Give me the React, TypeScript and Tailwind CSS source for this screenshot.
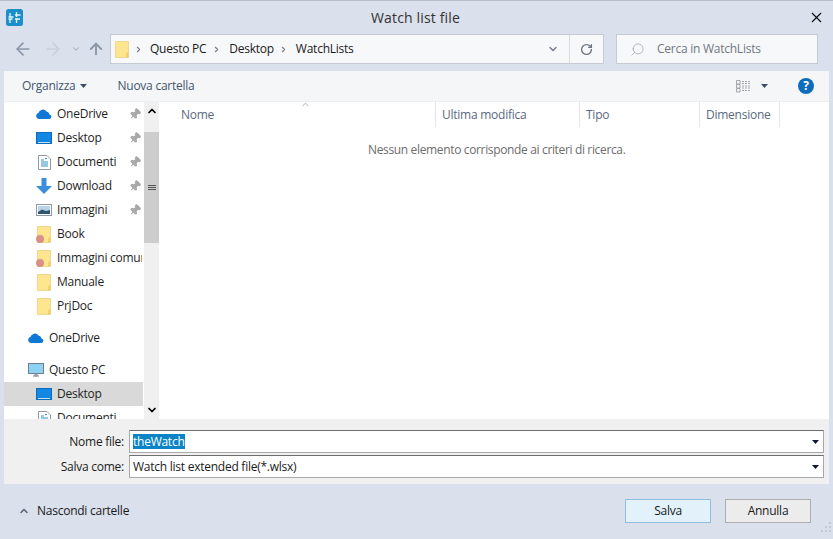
import { ArrowLeft, ArrowRight, ArrowUp, ChevronDown, ChevronRight, ChevronUp, Pin, RotateCw, Search, X } from "lucide-react";

function Caret({ className = "" }: { className?: string }) {
  return (
    <svg width="7" height="4" viewBox="0 0 9 5" preserveAspectRatio="none" className={className}>
      <path d="M0 0h9L4.5 5z" fill="currentColor" />
    </svg>
  );
}

function AppIcon() {
  return (
    <svg width="17" height="17" viewBox="0 0 17 17">
      <rect width="17" height="17" rx="2.5" fill="#1b8fc9" />
      <path d="M4 4v4M2.5 8h5M4 10v4M2.5 10h4M10.5 3v5M9 6h5.5M10.5 10v4M9 10h5" stroke="#e8f6fc" strokeWidth="1.3" fill="none" />
    </svg>
  );
}

function FolderIcon({ shared = false }: { shared?: boolean }) {
  return (
    <svg width="16" height="17" viewBox="0 0 16 17">
      <path d="M1.500.500h13v16h-13z" fill="#fde68f" stroke="#ecd98e" />
      <path d="M12 16.500v-4l2.500-2v6z" fill="#f2cf6b" />
      {shared && <circle cx="4" cy="13" r="4" fill="#d98f86" />}
    </svg>
  );
}

function CloudIcon() {
  return (
    <svg width="16" height="10" viewBox="0 0 16 10">
      <path d="M3 10a3 3 0 0 1-.6-5.900A4.500 4.500 0 0 1 10.500 2.500a3.600 3.600 0 0 1 3 3A2.300 2.300 0 0 1 13.500 10z" fill="#0f78d4" />
    </svg>
  );
}

function DesktopIcon() {
  return (
    <svg width="16" height="12" viewBox="0 0 16 12">
      <rect width="16" height="12" fill="#1387e4" />
      <rect x="0.500" y="0.500" width="15" height="11" fill="none" stroke="#0a6cbb" />
      <path d="M2 10.500h12" stroke="#bfe2fa" />
    </svg>
  );
}

function DocumentIcon() {
  return (
    <svg width="13" height="15" viewBox="0 0 13 15">
      <path d="M.5.500h8.500l3.500 3.500v10.500H.5z" fill="#fff" stroke="#8f9aa6" />
      <path d="M3 5h3M3 7h7M3 9h7M3 11h7M7 3.500h2" stroke="#2f8fd0" />
    </svg>
  );
}

function DownloadIcon() {
  return (
    <svg width="16" height="16" viewBox="0 0 16 16">
      <path d="M5.500 0h5v8H16l-8 8-8-8h5.500z" fill="#3b8edb" />
    </svg>
  );
}

function PicturesIcon() {
  return (
    <svg width="16" height="12" viewBox="0 0 16 12">
      <rect x="0.500" y="0.500" width="15" height="11" fill="#fff" stroke="#8d99a6" />
      <rect x="2" y="2" width="12" height="8" fill="#b9d4e8" />
      <path d="M2 8l4-2.500 4 1.500 4-1v4H2z" fill="#30566f" />
    </svg>
  );
}

function MonitorIcon() {
  return (
    <svg width="16" height="14" viewBox="0 0 16 14">
      <rect x="0.500" y="0.500" width="15" height="10" fill="#8fd0f5" stroke="#6c7f8f" />
      <path d="M5 13h6M7 11h2v2H7z" stroke="#7d8a96" fill="none" />
    </svg>
  );
}

function ViewIcon() {
  return (
    <svg width="16" height="13" viewBox="0 0 16 13" fill="none" stroke="#a3a7ac">
      <path d="M.5.500h3.500v3.500H.5zM.5 4.500h3.500V8H.5zM.5 8.500h3.500V12H.5z" />
      <path d="M6 1.500h9M6 3.500h9M6 6h9M6 8h9M6 10.500h9" strokeDasharray="2 1" />
    </svg>
  );
}

function Grip() {
  return (
    <svg width="16" height="16" viewBox="0 0 16 16" className="absolute bottom-[3px] right-0 text-[#c3c9d6]">
      <path d="M12 2h2v2h-2zM8 6h2v2H8zM12 6h2v2h-2zM4 10h2v2H4zM8 10h2v2H8zM12 10h2v2h-2z" fill="currentColor" />
    </svg>
  );
}

function PathSep({ className }: { className: string }) {
  return <ChevronRight size={9} strokeWidth={3} className={`shrink-0 text-[#7a7f87] ${className}`} />;
}

function TreeRow({ icon, label, pinned, top, selected, clipped, root }: { icon: React.ReactNode; label: string; pinned?: boolean; top?: string; selected?: boolean; clipped?: boolean; root?: boolean }) {
  return (
    <div className={`flex h-6 shrink-0 items-center ${root ? "pl-6" : "pl-8"} ${top ?? ""} ${selected ? "mr-px bg-[#d9d9d9]" : ""} ${clipped ? "mr-[2px] overflow-hidden" : ""}`}>
      <span className="flex w-4 shrink-0 justify-center">{icon}</span>
      <span className="ml-[5px] whitespace-nowrap text-[#1f1f1f]">{label}</span>
      {pinned && <Pin size={12} className="ml-auto mr-[3px] shrink-0 rotate-45 fill-[#a8a8a8] text-[#a8a8a8]" />}
    </div>
  );
}

function Column({ label, width, last }: { label: string; width: string; last?: boolean }) {
  return (
    <div className={`flex h-[25px] items-center text-[#5a6a80] ${width} ${last ? "" : "border-r border-[#e5e5e5]"}`}>
      {label}
    </div>
  );
}

function FormRow({ label, children }: { label: string; children: React.ReactNode }) {
  return (
    <div className="flex h-[23px] items-center">
      <span className="w-[120px] text-right text-[#1a1a1a]">{label}</span>
      <div className="ml-[5px] flex h-full w-[695px] items-center justify-between border border-[#a8a8a8] border-t-[#6f6f6f] bg-white pl-[3px] pr-1 text-[#1a1a1a]">
        {children}
        <Caret className="text-[#10183a]" />
      </div>
    </div>
  );
}

export default function App() {
  return (
    <div className="flex h-[539px] w-[833px] flex-col overflow-hidden border-t border-[#b9bcc4] bg-[#dae0ec] font-['Open_Sans',sans-serif] text-[12px] tracking-[-0.25px] text-[#1a1a1a]">
      <div className="flex h-[33px] shrink-0 items-center justify-between pl-[6px] pr-2">
        <AppIcon />
        <span className="text-[14px] tracking-[0.15px] text-[#333]">Watch list file</span>
        <X size={17} strokeWidth={1.5} className="text-black" />
      </div>

      <div className="flex h-[30px] shrink-0 items-center pl-[13px]">
        <div className="flex w-[97px] items-center text-[#8b97a8]">
          <ArrowLeft size={20} strokeWidth={2} />
          <ArrowRight size={20} strokeWidth={2} className="ml-[10px] text-[#c9d0dc]" />
          <ChevronDown size={10} strokeWidth={2.5} className="ml-2 text-[#a8b0bd]" />
          <ArrowUp size={18} strokeWidth={2.5} className="ml-[6px]" />
        </div>
        <div className="flex h-[30px] w-[494px] items-center border border-[#c5cad4] bg-[#f7f8fa]">
          <span className="ml-[3px]"><FolderIcon /></span>
          <PathSep className="ml-1" />
          <span className="ml-[7px]">Questo PC</span>
          <PathSep className="ml-[6px]" />
          <span className="ml-2">Desktop</span>
          <PathSep className="ml-[5px]" />
          <span className="ml-2">WatchLists</span>
          <ChevronDown size={12} strokeWidth={2.5} className="ml-auto mr-[10px] text-[#6d7682]" />
          <div className="flex h-full w-[34px] items-center justify-center border-l border-[#d5d9e0]">
            <RotateCw size={13} strokeWidth={2.5} className="text-[#6d7682]" />
          </div>
        </div>
        <div className="ml-3 flex h-[30px] w-[202px] items-center border border-[#c5cad4] bg-[#f7f8fa] pl-[13px] text-[#6f7782]">
          <Search size={15} strokeWidth={1} className="-scale-x-100 text-[#8f959e]" />
          <span className="ml-3">Cerca in WatchLists</span>
        </div>
      </div>

      <div className="mx-1 mt-[7px] flex h-[413px] w-[825px] shrink-0 flex-col bg-white">
        <div className="flex h-[31px] shrink-0 items-center border-b border-[#eeeeee] bg-[#f5f6f7] pl-[18px] text-[#43566f]">
          <span>Organizza</span>
          <Caret className="ml-[5px] text-[#3c4d66]" />
          <span className="ml-[30px]">Nuova cartella</span>
          <span className="ml-auto"><ViewIcon /></span>
          <Caret className="ml-[9px] text-[#3c4d66]" />
          <span className="ml-[30px] mr-[15px] flex h-4 w-4 items-center justify-center rounded-full bg-[#0f6cbd] text-[12px] font-bold text-white">?</span>
        </div>

        <div className="flex h-[317px] shrink-0">
          <div className="flex w-[140px] shrink-0 flex-col overflow-hidden">
            <TreeRow icon={<CloudIcon />} label="OneDrive" pinned />
            <TreeRow icon={<DesktopIcon />} label="Desktop" pinned />
            <TreeRow icon={<DocumentIcon />} label="Documenti" pinned />
            <TreeRow icon={<DownloadIcon />} label="Download" pinned />
            <TreeRow icon={<PicturesIcon />} label="Immagini" pinned />
            <TreeRow icon={<FolderIcon shared />} label="Book" />
            <TreeRow icon={<FolderIcon shared />} label="Immagini comuni" clipped />
            <TreeRow icon={<FolderIcon />} label="Manuale" />
            <TreeRow icon={<FolderIcon />} label="PrjDoc" />
            <TreeRow icon={<CloudIcon />} label="OneDrive" top="mt-2" root />
            <TreeRow icon={<MonitorIcon />} label="Questo PC" top="mt-2" root />
            <TreeRow icon={<DesktopIcon />} label="Desktop" selected />
            <TreeRow icon={<DocumentIcon />} label="Documenti" />
          </div>

          <div className="flex w-[15px] shrink-0 flex-col items-center bg-[#f0f0f0]">
            <div className="flex h-[30px] w-full shrink-0 justify-center pt-[3px]">
              <ChevronUp size={12} strokeWidth={3.5} className="text-black" />
            </div>
            <div className="flex h-[111px] w-full flex-col items-center justify-center gap-px bg-[#cdcdcd]">
              <span className="h-px w-2 bg-[#555]" />
              <span className="h-px w-2 bg-[#555]" />
              <span className="h-px w-2 bg-[#555]" />
            </div>
            <ChevronDown size={12} strokeWidth={3.5} className="mb-[3px] mt-auto text-black" />
          </div>

          <div className="relative min-w-0 flex-1">
            <ChevronUp size={11} strokeWidth={1} className="absolute left-[141px] top-[-3px] text-[#555]" />
            <div className="flex">
              <Column label="Nome" width="w-[277px] pl-[22px]" />
              <Column label="Ultima modifica" width="w-[144px] pl-[6px]" />
              <Column label="Tipo" width="w-[120px] pl-[6px]" />
              <Column label="Dimensione" width="w-[80px] pl-[6px]" />
            </div>
            <p className="ml-[209px] mt-[14px] tracking-[-0.35px] text-[#6d6d6d]">Nessun elemento corrisponde ai criteri di ricerca.</p>
          </div>
        </div>

        <div className="flex flex-1 flex-col gap-[2px] bg-[#f0f0f0] pt-[11px]">
          <FormRow label="Nome file:">
            <span className="bg-[#0a84c6] leading-[15px] text-white">theWatch</span>
          </FormRow>
          <FormRow label="Salva come:">
            <span>Watch list extended file(*.wlsx)</span>
          </FormRow>
        </div>
      </div>

      <div className="relative flex flex-1 items-center pb-[2px] pl-[18px]">
        <ChevronUp size={12} strokeWidth={2.5} className="text-[#4a5568]" />
        <span className="ml-[7px]">Nascondi cartelle</span>
        <button className="ml-auto h-6 w-[86px] border border-[#8fbde0] bg-[#e3f1fb]">Salva</button>
        <button className="ml-[14px] mr-[22px] h-6 w-[86px] border border-[#adadad] bg-[#ececec]">Annulla</button>
        <Grip />
      </div>
    </div>
  );
}
